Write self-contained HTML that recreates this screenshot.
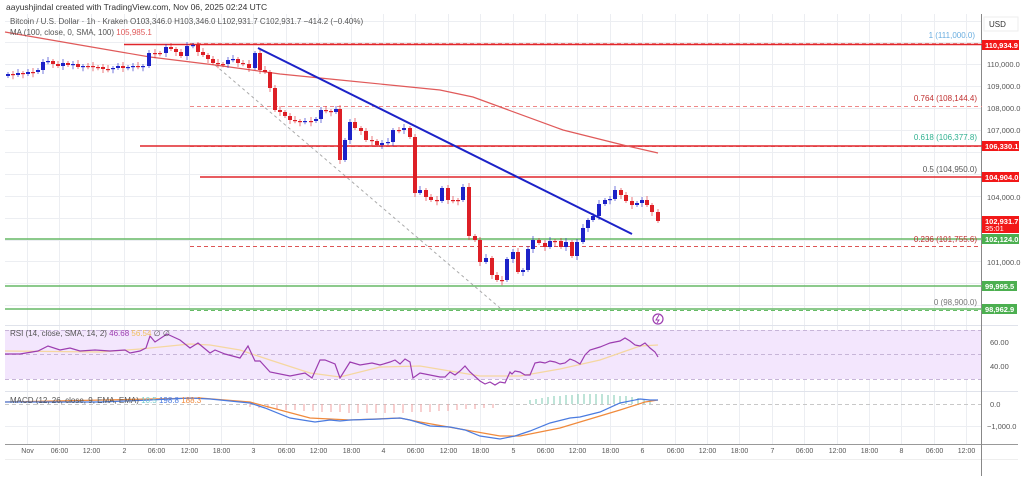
<!DOCTYPE html>
<html><head><meta charset="utf-8">
<style>
html,body{margin:0;padding:0;background:#fff;width:1024px;height:493px;overflow:hidden;font-family:"Liberation Sans",sans-serif;}
svg{position:absolute;left:0;top:0;}
</style></head>
<body>
<svg id="s" width="1024" height="493" xmlns="http://www.w3.org/2000/svg" font-family="Liberation Sans, sans-serif">
<rect x="0" y="0" width="1024" height="493" fill="#fff"/>
<g id="grid" stroke="#eceef2" stroke-width="1"></g>
<rect x="5" y="330" width="977" height="49" fill="#f3e6fd"/>
<g stroke="#c7b5d8" stroke-dasharray="4,3" stroke-width="1">
<line x1="5" y1="330.5" x2="982" y2="330.5"/><line x1="5" y1="354.5" x2="982" y2="354.5"/><line x1="5" y1="379.5" x2="982" y2="379.5"/>
</g>
<line x1="5" y1="404.5" x2="982" y2="404.5" stroke="#c8c8c8" stroke-dasharray="4,3"/>
<line x1="5" y1="325.5" x2="1018" y2="325.5" stroke="#e0e3eb"/>
<line x1="5" y1="391.5" x2="1018" y2="391.5" stroke="#e0e3eb"/>
<line x1="5" y1="444.5" x2="1018" y2="444.5" stroke="#999"/>
<line x1="5" y1="459.5" x2="1018" y2="459.5" stroke="#eee"/>
<line x1="981.5" y1="14" x2="981.5" y2="476" stroke="#888"/>
<g stroke-dasharray="4,3" stroke-width="1">
<line x1="190" y1="43.5" x2="982" y2="43.5" stroke="#e88"/>
<line x1="190" y1="106.5" x2="982" y2="106.5" stroke="#e88"/>
<line x1="190" y1="146.5" x2="982" y2="146.5" stroke="#e88"/>
<line x1="190" y1="246.5" x2="982" y2="246.5" stroke="#d55"/>
<line x1="190" y1="310.5" x2="982" y2="310.5" stroke="#6b6"/>
</g>
<line x1="124" y1="44.5" x2="982" y2="44.5" stroke="#e0262b" stroke-width="1.5"/>
<line x1="140" y1="146" x2="982" y2="146" stroke="#e0262b" stroke-width="1.5"/>
<line x1="200" y1="177" x2="982" y2="177" stroke="#e0262b" stroke-width="1.5"/>
<line x1="5" y1="239" x2="982" y2="239" stroke="#66b866" stroke-width="1.5"/>
<line x1="5" y1="286" x2="982" y2="286" stroke="#66b866" stroke-width="1.5"/>
<line x1="5" y1="309" x2="982" y2="309" stroke="#66b866" stroke-width="1.5"/>
<line x1="215" y1="65" x2="500" y2="308" stroke="#aaa" stroke-dasharray="3,3"/>
<polyline fill="none" stroke="#e05a5a" stroke-width="1.2" points="5,32 80,45 150,57 215,65 280,74 340,80 400,86 440,90 473,97 503,108 563,130 623,145 658,153"/>
<g id="candles"></g>
<line x1="258" y1="48" x2="632" y2="234" stroke="#1c22c8" stroke-width="2"/>
<polyline fill="none" stroke="#f5d7a0" stroke-width="1.3" points="5,351 100,352 140,349 190,344 210,345 240,350 270,360 310,373 340,377 380,367 420,366 480,376 520,376 560,369 600,360 640,346 658,345"/>
<polyline fill="none" stroke="#9c3db0" stroke-width="1.2" points="5,354 20,354 38,351 48,346 60,350 70,348 80,351 95,350 110,351 125,350 130,353 140,351 146,348 150,336 155,342 167,334 180,340 190,348 198,343 210,353 215,350 225,354 240,358 248,346 255,361 260,361 270,372 290,376 305,373 312,378 320,360 325,360 335,364 340,378 350,362 360,365 372,363 380,365 390,362 395,360 400,364 405,359 410,362 413,378 420,373 440,377 445,377 450,372 455,375 460,371 465,366 470,372 480,381 485,384 490,382 495,385 500,382 505,383 510,372 512,374 515,371 520,372 525,375 530,375 535,363 540,362 545,363 550,361 555,362 560,364 565,363 570,359 575,361 580,364 585,355 590,350 600,347 605,345 610,343 615,342 620,341 625,338 630,341 635,345 640,346 645,343 650,348 655,352 658,357"/>
<g id="hist"></g>
<polyline fill="none" stroke="#f08a3c" stroke-width="1.2" points="5,402 200,398 250,402 280,410 310,418 350,420 400,418 420,422 460,429 500,436 520,436 560,428 590,419 620,410 645,402 658,400"/>
<polyline fill="none" stroke="#4a7be0" stroke-width="1.2" points="5,402 100,402 150,400 190,398 210,399 250,403 265,408 290,418 315,422 330,420 340,421 350,420 380,419 400,418 410,420 430,426 450,427 465,430 480,436 500,439 515,436 530,431 550,423 570,418 580,417 600,412 620,403 640,399 650,400 658,400"/>
<circle cx="658" cy="319" r="5" fill="none" stroke="#9c3db0" stroke-width="1.2"/>
<path d="M659 315 L656 320 L659 320 L657 323" fill="none" stroke="#9c3db0" stroke-width="1"/>
<text x="6" y="10" font-size="8.5" fill="#333">aayushjindal created with TradingView.com, Nov 06, 2025 02:24 UTC</text>
<text x="10" y="24" font-size="8" fill="#555">Bitcoin / U.S. Dollar · 1h · Kraken  O103,346.0  H103,346.0  L102,931.7  C102,931.7  −414.2 (−0.40%)</text>
<text x="10" y="35" font-size="8" fill="#555">MA (100, close, 0, SMA, 100) <tspan fill="#e05a5a">105,985.1</tspan></text>
<text x="10" y="336" font-size="8" fill="#555">RSI (14, close, SMA, 14, 2) <tspan fill="#9c3db0">46.68</tspan> <tspan fill="#f0c060">56.54</tspan> ∅ ∅</text>
<text x="10" y="403" font-size="8" fill="#555">MACD (12, 26, close, 9, EMA, EMA) <tspan fill="#7cc">10.5</tspan> <tspan fill="#4a7be0">198.8</tspan> <tspan fill="#f08a3c">188.3</tspan></text>
<g font-size="8" text-anchor="end">
<text x="975" y="38" fill="#6aaee0">1 (111,000.0)</text>
<text x="977" y="101" fill="#c03030">0.764 (108,144.4)</text>
<text x="977" y="140" fill="#30b090">0.618 (106,377.8)</text>
<text x="977" y="172" fill="#555">0.5 (104,950.0)</text>
<text x="977" y="242" fill="#c03030">0.236 (101,755.6)</text>
<text x="977" y="305" fill="#777">0 (98,900.0)</text>
</g>
<rect x="984" y="17" width="34" height="14" fill="#fff" stroke="#eee"/>
<text x="989" y="27" font-size="8" fill="#333">USD</text>
<g font-size="7.5" fill="#555">
<text x="987" y="67">110,000.0</text>
<text x="987" y="89">109,000.0</text>
<text x="987" y="111">108,000.0</text>
<text x="987" y="133">107,000.0</text>
<text x="987" y="200">104,000.0</text>
<text x="987" y="265">101,000.0</text>
<text x="990" y="345">60.00</text>
<text x="990" y="369">40.00</text>
<text x="990" y="407">0.0</text>
<text x="987" y="429">−1,000.0</text>
</g>
<g font-size="7.5" fill="#fff" font-weight="bold">
<rect x="982" y="40" width="37" height="10" fill="#f21818"/><text x="985" y="48">110,934.9</text>
<rect x="982" y="141" width="37" height="10" fill="#f21818"/><text x="985" y="149">106,330.1</text>
<rect x="982" y="172" width="37" height="10" fill="#f21818"/><text x="985" y="180">104,904.0</text>
<rect x="982" y="216" width="37" height="17" fill="#f21818"/><text x="985" y="224">102,931.7</text><text x="985" y="231" font-weight="normal">35:01</text>
<rect x="982" y="234" width="37" height="10" fill="#4caf50"/><text x="985" y="242">102,124.0</text>
<rect x="982" y="281" width="35" height="10" fill="#4caf50"/><text x="985" y="289">99,995.5</text>
<rect x="982" y="304" width="35" height="10" fill="#4caf50"/><text x="985" y="312">98,962.9</text>
</g>
<g id="times" font-size="7" fill="#555" text-anchor="middle"></g>
</svg>
<script>
(function(){
var NS="http://www.w3.org/2000/svg";
function el(t,a,p){var e=document.createElementNS(NS,t);for(var k in a)e.setAttribute(k,a[k]);document.getElementById(p).appendChild(e);return e;}
var labels=["Nov","06:00","12:00","2","06:00","12:00","18:00","3","06:00","12:00","18:00","4","06:00","12:00","18:00","5","06:00","12:00","18:00","6","06:00","12:00","18:00","7","06:00","12:00","18:00","8","06:00","12:00"];
for(var i=0;i<30;i++){var gx=Math.round(26.5+32.4*i)+0.5;el("line",{x1:gx,y1:14,x2:gx,y2:444},"grid");var t=el("text",{x:gx,y:453},"times");t.textContent=labels[i];}
for(var gy=20.5;gy<320;gy+=21.9){el("line",{x1:5,y1:Math.round(gy)+0.5,x2:982,y2:Math.round(gy)+0.5},"grid");}
el("line",{x1:5,y1:342.5,x2:982,y2:342.5,stroke:"#dccbe8"},"grid");
el("line",{x1:5,y1:367.5,x2:982,y2:367.5,stroke:"#dccbe8"},"grid");
el("line",{x1:5,y1:426.5,x2:982,y2:426.5},"grid");
var d=[[8,74],[13,75],[18,73],[23,74],[28,72],[33,72],[38,70],[43,62],[48,61],[53,64],[58,66],[63,63],[68,65],[73,64],[78,67],[83,66],[88,66],[93,67],[98,67],[103,69],[108,69],[113,68],[118,66],[123,68],[128,67],[133,66],[138,67],[143,66],[149,53],[155,53],[160,53],[166,47],[171,49],[176,52],[181,56],[187,46],[193,45],[198,52],[203,55],[208,59],[213,63],[218,64],[223,64],[228,60],[233,59],[238,63],[243,64],[249,68],[255,53],[260,70],[265,72],[270,88],[275,110],[280,112],[285,116],[290,120],[295,121],[300,122],[305,121],[311,121],[316,119],[321,110],[326,111],[331,112],[336,109],[340,160],[345,140],[350,122],[355,128],[361,131],[366,140],[372,141],[377,145],[382,143],[388,142],[393,130],[399,130],[404,128],[410,137],[415,193],[420,190],[426,197],[431,200],[437,201],[442,188],[448,200],[453,200],[458,200],[463,187],[469,236],[475,240],[480,262],[486,258],[492,275],[497,280],[502,280],[507,259],[513,252],[518,272],[523,270],[528,249],[533,240],[539,243],[545,247],[550,241],[555,241],[561,247],[566,242],[572,256],[577,242],[583,228],[588,220],[593,216],[599,204],[605,200],[610,199],[615,190],[621,195],[626,201],[632,205],[637,203],[642,200],[647,205],[652,212],[658,221]];
var prev=76;
for(var i=0;i<d.length;i++){var cx=d[i][0],c=d[i][1],o=prev;var up=c<o;var col=up?"#1c22c8":"#dd1f26";
var ty=Math.min(o,c),bh=Math.max(Math.abs(o-c),1.2);
var wl=ty-2-(i%3),wh=ty+bh+2+(i%2)*2;
el("line",{x1:cx,y1:wl,x2:cx,y2:wh,stroke:col,"stroke-width":1,opacity:0.6},"candles");
el("rect",{x:cx-2,y:ty,width:4,height:bh,fill:col},"candles");prev=c;}
for(var hx=250;hx<=500;hx+=9){var hh=3+Math.round(6*Math.sin((hx-250)/250*Math.PI));el("line",{x1:hx,y1:404,x2:hx,y2:404+hh,stroke:"#f0a0a0"},"hist");}
for(var hx2=530;hx2<=655;hx2+=6){var hh2=2+Math.round(8*Math.sin((hx2-520)/140*Math.PI));el("line",{x1:hx2,y1:404,x2:hx2,y2:404-hh2,stroke:"#7cc8b0"},"hist");}
})();
</script>
</body></html>
